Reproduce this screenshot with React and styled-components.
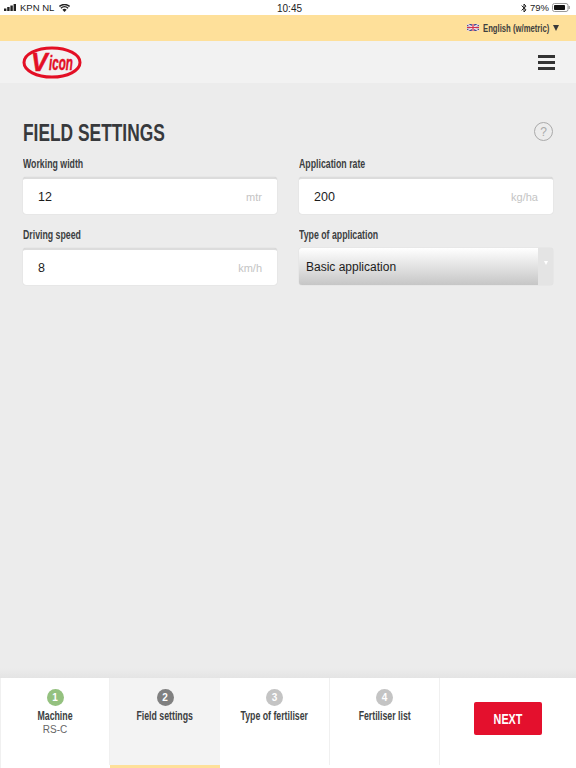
import React from 'react';
import styled, { createGlobalStyle } from 'styled-components';

const GlobalStyle = createGlobalStyle`
  html, body {
    margin: 0;
    padding: 0;
    background: #ececec;
  }
  * {
    box-sizing: border-box;
  }
`;

const sans = `"Liberation Sans", Arial, sans-serif`;

// no condensed face is installed, so the bold labels are squeezed horizontally
const Condensed = styled.span`
  display: inline-block;
  white-space: nowrap;
  font-weight: 700;
  transform: scaleX(${(p) => p.$scale || 0.73});
  transform-origin: ${(p) => p.$origin || 'left'} center;
`;

const Page = styled.div`
  width: 576px;
  height: 768px;
  display: flex;
  flex-direction: column;
  overflow: hidden;
  font-family: ${sans};
  background: #ececec;
`;

const StatusBar = styled.div`
  height: 15px;
  flex: none;
  background: #fff;
  display: grid;
  grid-template-columns: 1fr auto 1fr;
  align-items: center;
  padding: 0 6px 0 4px;
  font-size: 9.5px;
  color: #222;
`;

const StatusLeft = styled.div`
  display: flex;
  align-items: center;
  gap: 3px;
`;

const StatusTime = styled.div`
  font-size: 10px;
  margin-left: 5px;
  padding-top: 1px;
`;

const StatusRight = styled.div`
  display: flex;
  align-items: center;
  justify-content: flex-end;
  gap: 3px;
`;

const LangBar = styled.div`
  height: 26px;
  flex: none;
  background: #fee09a;
  display: flex;
  align-items: center;
  justify-content: flex-end;
  padding: 0 17px 0 0;
  gap: 4px;
  font-size: 11px;
  color: #3f3f3f;
`;

const LangText = styled.div`
  width: 66px;
  display: flex;
  margin-top: -1px;
`;

const Arrow = styled.span`
  width: 0;
  height: 0;
  border-left: 3px solid transparent;
  border-right: 3px solid transparent;
  border-top: 6px solid #3a3a3a;
`;

const Header = styled.div`
  height: 42px;
  flex: none;
  background: #f2f2f2;
  display: flex;
  align-items: center;
  justify-content: space-between;
  padding: 0 21px 0 22px;
`;

const Burger = styled.div`
  width: 17px;
  display: flex;
  flex-direction: column;
  gap: 3px;
  & > span {
    display: block;
    height: 3px;
    background: #333;
  }
`;

const Main = styled.div`
  flex: 1;
  padding: 37px 23px 0;
  background: linear-gradient(#ececec calc(100% - 10px), #e4e4e4);
`;

const TitleRow = styled.div`
  display: flex;
  justify-content: space-between;
  align-items: flex-start;
  height: 37px;
`;

const Title = styled.h1`
  margin: 0;
  font-size: 23px;
  line-height: 26px;
  color: #37393c;
`;

const Help = styled.div`
  width: 19px;
  height: 19px;
  margin-top: 2px;
  border: 1.5px solid #aaa;
  border-radius: 50%;
  color: #aaa;
  font-size: 12px;
  display: flex;
  align-items: center;
  justify-content: center;
`;

const Form = styled.div`
  display: grid;
  grid-template-columns: 254px 254px;
  column-gap: 22px;
  row-gap: 14px;
`;

const Field = styled.div`
  display: flex;
  flex-direction: column;
  gap: 6px;
`;

const Label = styled.div`
  font-size: 12px;
  line-height: 14px;
  color: #3c3e41;
`;

const InputBox = styled.div`
  height: 37px;
  background: #fff;
  border-radius: 3px;
  border-top: 2px solid #dcdcdc;
  box-shadow: 0 0 1px rgba(0, 0, 0, 0.2);
  display: flex;
  align-items: center;
  justify-content: space-between;
  padding: 0 15px;
  font-size: 12.5px;
  color: #1c1c1c;
`;

const Unit = styled.span`
  font-size: 11px;
  color: #c4c4c4;
`;

const SelectBox = styled.div`
  height: 37px;
  display: flex;
  border-radius: 3px;
  overflow: hidden;
  box-shadow: 0 0 1px rgba(0, 0, 0, 0.2);
`;

const SelectValue = styled.div`
  flex: 1;
  background: linear-gradient(#fff, #c6c6c6);
  display: flex;
  align-items: center;
  padding-left: 7px;
  font-size: 12px;
  color: #1c1c1c;
`;

const SelectArrow = styled.div`
  width: 15px;
  background: #e4e4e4;
  display: flex;
  justify-content: center;
  padding-top: 13px;
  &::after {
    content: '';
    width: 0;
    height: 0;
    border-left: 2.5px solid transparent;
    border-right: 2.5px solid transparent;
    border-top: 4px solid #fff;
  }
`;

const Footer = styled.div`
  height: 90px;
  flex: none;
  background: #fff;
  display: flex;
  border-left: 1px solid #f0f0f0;
`;

const Step = styled.div`
  width: ${(p) => (p.$first ? 109 : 110)}px;
  height: ${(p) => (p.$active ? 90 : 87)}px;
  flex: none;
  padding-top: 11px;
  display: flex;
  flex-direction: column;
  align-items: center;
  background: ${(p) => (p.$active ? '#f3f3f3' : '#fff')};
  border-right: ${(p) => (p.$active ? 'none' : '1px solid #f0f0f0')};
  border-bottom: ${(p) => (p.$active ? '3px solid #fee09a' : 'none')};
`;

const Badge = styled.div`
  width: 17px;
  height: 17px;
  border-radius: 50%;
  background: ${(p) => p.$color};
  color: #fff;
  font-size: 10px;
  font-weight: 700;
  display: flex;
  align-items: center;
  justify-content: center;
`;

const StepName = styled.div`
  margin-top: 3px;
  font-size: 12px;
  line-height: 14px;
  color: #3c3e41;
`;

const StepSub = styled.div`
  margin-top: 1px;
  font-size: 10px;
  line-height: 12px;
  color: #666;
`;

const NextCell = styled.div`
  flex: 1;
  display: flex;
  align-items: center;
  justify-content: center;
  padding-bottom: 10px;
`;

const NextButton = styled.button`
  width: 68px;
  height: 33px;
  border: none;
  border-radius: 2px;
  background: #e4102d;
  color: #fff;
  font-family: ${sans};
  font-size: 15px;
  padding: 0;
`;

const SignalIcon = () => (
  <svg width="13" height="7" viewBox="0 0 13 7">
    <rect x="0" y="4.5" width="2.4" height="2.5" fill="#222" />
    <rect x="3.2" y="3" width="2.4" height="4" fill="#222" />
    <rect x="6.4" y="1.5" width="2.4" height="5.5" fill="#222" />
    <rect x="9.6" y="0" width="2.4" height="7" fill="#222" />
  </svg>
);

const WifiIcon = () => (
  <svg width="11" height="8" viewBox="0 0 11 8" style={{ marginLeft: 2 }}>
    <path d="M5.5 8 3.4 5.8a3.1 3.1 0 0 1 4.2 0Z" fill="#222" />
    <path d="M1.9 4.2a5.4 5.4 0 0 1 7.2 0" fill="none" stroke="#222" strokeWidth="1.4" />
    <path d="M.4 2.4a7.8 7.8 0 0 1 10.2 0" fill="none" stroke="#222" strokeWidth="1.4" />
  </svg>
);

const BluetoothIcon = () => (
  <svg width="6" height="10" viewBox="0 0 6 10">
    <path d="M.6 2.6 5 6.8 3 9V1l2 2.2L.6 7.4" fill="none" stroke="#222" strokeWidth="1" />
  </svg>
);

const BatteryIcon = () => (
  <svg width="18" height="9" viewBox="0 0 18 9">
    <rect x=".5" y=".5" width="15.5" height="8" rx="2" fill="none" stroke="#999" />
    <rect x="2" y="2" width="11" height="5" rx=".8" fill="#111" />
    <rect x="16.6" y="3" width="1.2" height="3" fill="#999" />
  </svg>
);

const FlagIcon = () => (
  <svg width="12" height="7" viewBox="0 0 12 7" style={{ marginTop: -2 }}>
    <rect width="12" height="7" rx="1" fill="#3c4a8c" />
    <path d="M0 0 12 7M12 0 0 7" stroke="#f4dce0" strokeWidth="1.4" />
    <path d="M6 0v7M0 3.5h12" stroke="#f4dce0" strokeWidth="2.4" />
    <path d="M6 0v7M0 3.5h12" stroke="#d3304a" strokeWidth="1.2" />
  </svg>
);

const VLogo = () => (
  <svg width="60" height="33" viewBox="0 0 60 33">
    <ellipse cx="30" cy="16.5" rx="28" ry="14.6" fill="none" stroke="#e30f25" strokeWidth="3" />
    <g fontFamily={sans} fontWeight="700" fontStyle="italic" fill="#e30f25" stroke="#e30f25" strokeWidth=".5">
      <text transform="translate(9 25) scale(1 1.05)" fontSize="25">V</text>
      <text transform="translate(27 24) scale(.58 1)" fontSize="20">icon</text>
    </g>
  </svg>
);

const STEPS = [
  { n: 1, name: 'Machine', sub: 'RS-C', color: '#94c17f' },
  { n: 2, name: 'Field settings', color: '#808080', active: true },
  { n: 3, name: 'Type of fertiliser', color: '#c4c4c4' },
  { n: 4, name: 'Fertiliser list', color: '#c4c4c4' },
];

const App = () => {
  return (
    <Page>
      <GlobalStyle />
      <StatusBar>
        <StatusLeft>
          <SignalIcon />
          <span>KPN NL</span>
          <WifiIcon />
        </StatusLeft>
        <StatusTime>10:45</StatusTime>
        <StatusRight>
          <BluetoothIcon />
          <span>79%</span>
          <BatteryIcon />
        </StatusRight>
      </StatusBar>
      <LangBar>
        <FlagIcon />
        <LangText>
          <Condensed $scale={0.7}>English (w/metric)</Condensed>
        </LangText>
        <Arrow />
      </LangBar>
      <Header>
        <VLogo />
        <Burger>
          <span />
          <span />
          <span />
        </Burger>
      </Header>
      <Main>
        <TitleRow>
          <Title>
            <Condensed $scale={0.755}>FIELD SETTINGS</Condensed>
          </Title>
          <Help>?</Help>
        </TitleRow>
        <Form>
          <Field>
            <Label><Condensed>Working width</Condensed></Label>
            <InputBox>
              12<Unit>mtr</Unit>
            </InputBox>
          </Field>
          <Field>
            <Label><Condensed>Application rate</Condensed></Label>
            <InputBox>
              200<Unit>kg/ha</Unit>
            </InputBox>
          </Field>
          <Field>
            <Label><Condensed>Driving speed</Condensed></Label>
            <InputBox>
              8<Unit>km/h</Unit>
            </InputBox>
          </Field>
          <Field>
            <Label><Condensed>Type of application</Condensed></Label>
            <SelectBox>
              <SelectValue>Basic application</SelectValue>
              <SelectArrow />
            </SelectBox>
          </Field>
        </Form>
      </Main>
      <Footer>
        {STEPS.map((s) => (
          <Step key={s.n} $active={s.active} $first={s.n === 1}>
            <Badge $color={s.color}>{s.n}</Badge>
            <StepName><Condensed $origin="center">{s.name}</Condensed></StepName>
            {s.sub && <StepSub>{s.sub}</StepSub>}
          </Step>
        ))}
        <NextCell>
          <NextButton>
            <Condensed $origin="center" $scale={0.72}>NEXT</Condensed>
          </NextButton>
        </NextCell>
      </Footer>
    </Page>
  );
};

export default App;
